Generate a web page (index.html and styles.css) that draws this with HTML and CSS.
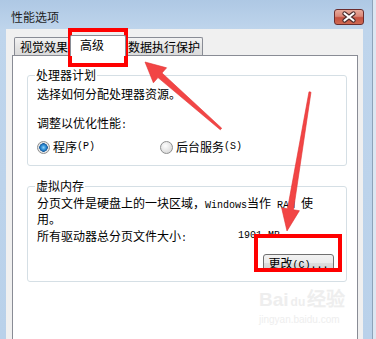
FILE: index.html
```html
<!DOCTYPE html>
<html lang="zh-CN">
<head>
    <meta charset="UTF-8">
    <title>性能选项</title>
    <link rel="stylesheet" href="styles.css">
</head>
<body>

    <div class="window">
        <div class="titlebar">
            <span class="title">性能选项</span>
            <span class="close">
                <svg width="30" height="16" viewBox="0 0 30 16">
                    <path d="M10.5 4.5 L19.5 11.5 M19.5 4.5 L10.5 11.5" stroke="#4a2c2c" stroke-width="4.4" stroke-linecap="round"/>
                    <path d="M10.5 4.5 L19.5 11.5 M19.5 4.5 L10.5 11.5" stroke="#fff" stroke-width="2.2" stroke-linecap="round"/>
                </svg>
            </span>
        </div>

        <div class="client">
            <div class="tabs">
                <div class="tab tab-first">视觉效果</div>
                <div class="tab active">高级</div>
                <div class="tab tab-last">数据执行保护</div>
            </div>

            <div class="panel">
                <fieldset class="group group-cpu">
                    <legend>处理器计划</legend>
                    <div class="line first">选择如何分配处理器资源。</div>
                    <div class="line second">调整以优化性能<span class="mono">:</span></div>
                    <div class="radios">
                        <label class="radio-item radio-first"><span class="radio checked"></span>程序<span class="mono">(P)</span></label>
                        <label class="radio-item"><span class="radio"></span>后台服务<span class="mono">(S)</span></label>
                    </div>
                </fieldset>

                <fieldset class="group group-mem">
                    <legend>虚拟内存</legend>
                    <p class="desc">分页文件是硬盘上的一块区域，<span class="mono">Windows</span>当作<span class="mono"> RAM </span>使<br>用。</p>
                    <div class="total">
                        <span class="total-label">所有驱动器总分页文件大小<span class="mono">:</span></span>
                        <span class="mono">1901 MB</span>
                    </div>
                    <div class="actions">
                        <button class="btn">更改<span class="mono">(C)...</span></button>
                    </div>
                </fieldset>
            </div>
        </div>
    </div>

    <!-- annotations drawn over the dialog -->
    <div class="mark mark-tab"></div>
    <div class="mark mark-btn"></div>

    <svg class="arrows" width="376" height="339" viewBox="0 0 376 339">
        <polygon points="145,62 166.6,67.8 162,73 221.7,128.2 220.3,129.8 158,77.6 153.4,82.8" />
        <polygon points="287,231 299.4,210.7 293.5,209.8 311,92.2 309,91.8 287.5,208.8 281.6,207.8" />
    </svg>

    <div class="watermark">
        <div class="wm-logo">Bai<span class="wm-du">du</span>经验</div>
        <div class="wm-url">jingyan.baidu.com</div>
    </div>

</body>
</html>
```

FILE: styles.css
```css
/* Global */
body {
    margin: 0;
    width: 376px;
    height: 339px;
    overflow: hidden;
    background: #dce6f1;
    font-family: "Noto Sans CJK SC", sans-serif;
    font-size: 12px;
    color: #000;
}

.mono {
    font-family: "Liberation Mono", monospace;
    font-size: 10px;
}

/* Window frame */
.window {
    width: 372px;
    height: 339px;
    border-right: 1px solid #8ea3b9;
    background: linear-gradient(#aec8e4, #bfd5ec 30px, #b9d1ea);
}

.titlebar {
    box-sizing: border-box;
    height: 29px;
    padding: 9px 8px 4px 11px;
    display: flex;
    justify-content: space-between;
    align-items: center;
}

.title {
    line-height: 16px;
    color: #1e1e1e;
}

.close {
    display: block;
    width: 30px;
    height: 16px;
    box-sizing: border-box;
    border: 1px solid #6b2d2d;
    border-radius: 3px;
    background: linear-gradient(#e9ab9b, #d98778 45%, #c4503f 55%, #cf6a52);
}

.close svg {
    display: block;
    margin: -1px;
}

.client {
    margin: 0 9px 0 6px;
    height: 310px;
    background: #f0f0f0;
    overflow: hidden;
}

/* Tabs */
.tabs {
    display: flex;
    align-items: flex-end;
    margin-top: 6px;
    padding-left: 8px;
}

.tab {
    box-sizing: border-box;
    height: 18px;
    padding: 1px 3px 0 5px;
    line-height: 16px;
    border: 1px solid #898c95;
    border-bottom: none;
    border-radius: 2px 2px 0 0;
    background: linear-gradient(#f3f3f3, #e4e4e4 50%, #dadada);
}

.tab.active {
    position: relative;
    z-index: 1;
    height: 21px;
    margin: 0 0 -1px -2px;
    padding: 1px 21px 0 9px;
    background: #fff;
}

.tab.tab-last {
    margin-left: -2px;
    padding: 1px 2px 0 3px;
}

.panel {
    margin: 0 5px 0 6px;
    height: 300px;
    padding: 12px 10px 0 14px;
    border: 1px solid #898c95;
    background: #fff;
}

/* Group boxes */
.group {
    margin: 0;
    padding: 0 12px 11px 9px;
    border: 1px solid #d5dfe5;
    border-radius: 3px;
    min-inline-size: 0;
}

.group legend {
    margin-left: -2px;
    padding: 0 1px;
    line-height: 14px;
}

.line {
    line-height: 14px;
}

.line.first {
    margin-top: 5px;
}

.line.second {
    margin-top: 15px;
}

.radios {
    display: flex;
    margin-top: 7px;
    line-height: 14px;
}

.radio-item {
    display: flex;
    align-items: center;
}

.radio-first {
    width: 123px;
}

.radio {
    box-sizing: border-box;
    width: 13px;
    height: 13px;
    margin-right: 3px;
    border: 1px solid #8e8f8f;
    border-radius: 50%;
    background: radial-gradient(circle at 40% 35%, #fdfdfd, #e2e2e2 60%, #cfcfcf);
}

.radio.checked {
    background: radial-gradient(circle, #8fd3f7 0, #2a8ad4 2.5px, #1b5e9e 4px, #e8e8e8 4.5px, #d6d6d6);
}

.group-mem {
    margin-top: 13px;
    padding-bottom: 9px;
}

.desc {
    margin: 3px 0 0;
    line-height: 13px;
}

.total {
    display: flex;
    margin-top: 4px;
    line-height: 14px;
}

.total-label {
    width: 201px;
}

.actions {
    display: flex;
    justify-content: flex-end;
    margin-top: 8px;
}

.btn {
    box-sizing: border-box;
    width: 71px;
    height: 18px;
    padding: 0;
    border: 1px solid #707070;
    border-radius: 3px;
    background: linear-gradient(#f2f2f2, #ebebeb 48%, #dddddd 52%, #cfcfcf);
    font-family: "Noto Sans CJK SC", sans-serif;
    font-size: 12px;
    line-height: 16px;
    color: #000;
}

/* Red annotations */
.mark {
    position: absolute;
    box-sizing: border-box;
    border: 4px solid #ff0000;
}

.mark-tab {
    left: 68px;
    top: 28px;
    width: 60px;
    height: 39px;
}

.mark-btn {
    left: 254px;
    top: 234px;
    width: 88px;
    height: 38px;
}

.arrows {
    position: absolute;
    left: 0;
    top: 0;
    pointer-events: none;
}

.arrows polygon {
    fill: #f24545;
    stroke: #e03030;
    stroke-width: 0.6;
}

/* Baidu watermark */
.watermark {
    position: absolute;
    left: 259px;
    top: 288px;
    color: #eeeeee;
    font-family: "Liberation Sans", sans-serif;
}

.wm-logo {
    font-size: 19px;
    font-weight: bold;
    line-height: 24px;
}

.wm-du {
    font-size: 12px;
    margin: 0 2px;
}

.wm-url {
    font-size: 10px;
    line-height: 12px;
}
```
